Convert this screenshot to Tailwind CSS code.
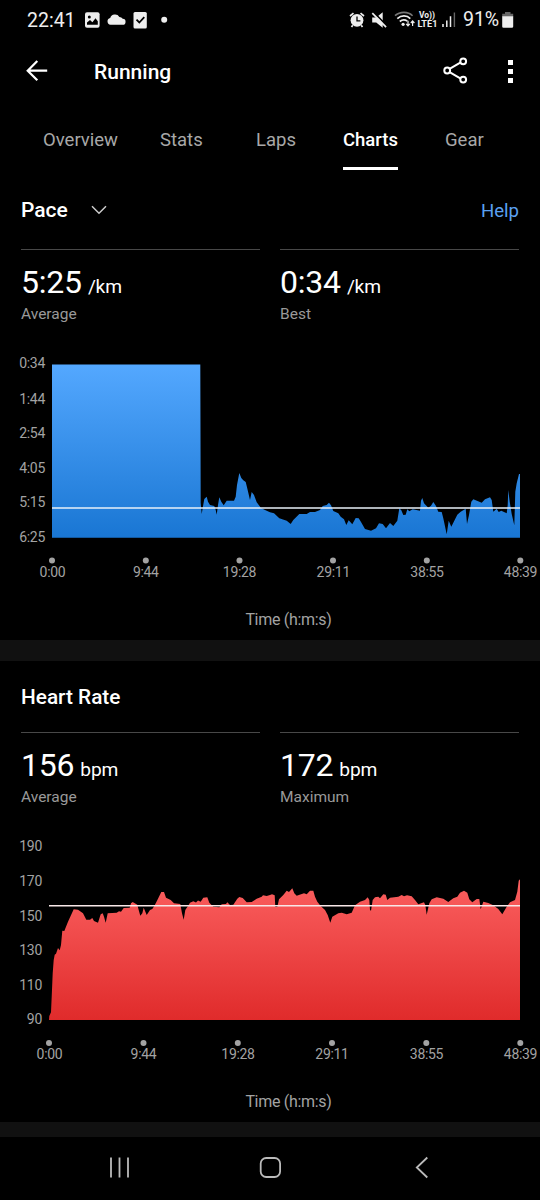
<!DOCTYPE html>
<html lang="en">
<head>
    <meta charset="UTF-8">
    <meta name="viewport" content="width=device-width, initial-scale=1.0">
    <title>Running - Charts</title>
    <script src="https://cdn.jsdelivr.net/npm/@tailwindcss/browser@4"></script>
</head>
<body class="bg-black font-['Roboto',sans-serif] text-white">
    <div class="w-[540px] h-[1200px] flex flex-col overflow-hidden">
        <!-- status bar -->
        <div class="h-10 flex items-center shrink-0 pl-[27px] text-[#eee]">
            <span class="w-[58px] pt-px text-[19.5px] leading-10">22:41</span>
            <svg class="w-[83px] h-10 shrink-0" viewBox="85 0 83 40" fill="#eee">
                <rect x="85" y="12.3" width="14.6" height="15.4" rx="2"/>
                <circle cx="89.3" cy="17" r="1.5" fill="#000"/>
                <path d="M87 24.8v-2.3l3-2.6 2.4 2.4 3.1-4 2.3 3v3.5z" fill="#000"/>
                <path d="M110.5 24.8a3.4 3.4 0 0 1-.3-6.7 5.1 5.1 0 0 1 9.2-1.1 3.9 3.9 0 0 1 3.3 1.8 3 3 0 0 1-.3 6z"/>
                <rect x="133.5" y="12" width="13.3" height="16.5" rx="1.5"/>
                <path d="m136.5 19.7 2.8 2.8 5-5.3" fill="none" stroke="#000" stroke-width="1.8"/>
                <circle cx="164.2" cy="19.7" r="3"/>
            </svg>
            <svg class="w-[112px] h-10 shrink-0 ml-auto" viewBox="347 0 112 40" fill="none" stroke="#eee">
                <!-- alarm -->
                <circle cx="357" cy="20.3" r="6.4" fill="#eee" stroke="none"/>
                <path d="M357 16.5v4.3h3.4" stroke="#000" stroke-width="1.3"/>
                <path d="m350 16 3.5-2.8M364 16l-3.5-2.8M352.8 25.3l-1.3 1.8M361.2 25.3l1.3 1.8" stroke-width="1.7"/>
                <!-- muted -->
                <path d="M372.2 17.5h4l6.5-5.3v15.5l-6.5-5.2h-4z" fill="#eee" stroke="none"/>
                <path d="m373.8 12.3 14 14.5" stroke="#000" stroke-width="1.8"/>
                <path d="m372.3 13.2 13.8 14" stroke-width="1.7"/>
                <!-- wifi -->
                <path d="M395 15.7c5-4.5 13-4.5 17.6 0" stroke="#777" stroke-width="1.6"/>
                <path d="M397.3 18.6c4-3.6 9.5-3.6 13 0M399.8 21.5c2.4-2 5.3-2 7.5-.4" stroke-width="1.7"/>
                <circle cx="403.1" cy="24.3" r="1.6" fill="#eee" stroke="none"/>
                <path d="M408 20.8v5m-1.8-2 1.8 2 1.8-2M412.6 26v-5m-1.8 2 1.8-2 1.8 2" stroke-width="1.2"/>
                <text x="419" y="18.4" font-size="9" font-weight="700" fill="#eee" stroke="none" textLength="16" lengthAdjust="spacingAndGlyphs">Vo))</text>
                <text x="417.4" y="27.3" font-size="9.4" font-weight="700" fill="#eee" stroke="none" textLength="20" lengthAdjust="spacingAndGlyphs">LTE1</text>
                <!-- signal -->
                <path d="M443 24v3M446.8 20.5V27M450.5 16.3V27" stroke-width="1.5"/>
                <path d="M454.4 12.5V27" stroke="#666" stroke-width="1.4"/>
            </svg>
            <span class="w-[37px] ml-1 text-[19.6px] leading-10 tracking-[-0.1px]">91%</span>
            <svg class="w-10 h-10 shrink-0" viewBox="500 0 40 40">
                <path d="M505 12h5.5v1.8h2.7v3h-11v-3h2.8z" fill="#666"/>
                <path d="M502.2 16.3h11v10.2q0 1.3-1.3 1.3h-8.4q-1.3 0-1.3-1.3z" fill="#eee"/>
            </svg>
        </div>

        <!-- app bar -->
        <header class="h-[62px] shrink-0 flex items-center pl-[26px] pr-[27px]">
            <svg class="w-6 h-6" viewBox="0 0 24 24" fill="none" stroke="#fff" stroke-width="2.2">
                <path d="M21.2 11.7H2M11.3 2 1.7 11.7l9.6 9.6"/>
            </svg>
            <h1 class="ml-11 pt-0.5 text-[21px] leading-7 font-medium">Running</h1>
            <svg class="w-[26px] h-7 ml-auto" viewBox="442 57 26 28" fill="none" stroke="#fff" stroke-width="2">
                <path d="m450 68.7 10.3-6M450 72.3l10.3 6"/>
                <circle cx="447.2" cy="70.5" r="2.9"/>
                <circle cx="463.2" cy="61.3" r="2.9"/>
                <circle cx="463.2" cy="79.6" r="2.9"/>
            </svg>
            <div class="ml-10 flex flex-col gap-1">
                <i class="w-[5px] h-[5px] bg-white"></i>
                <i class="w-[5px] h-[5px] bg-white"></i>
                <i class="w-[5px] h-[5px] bg-white"></i>
            </div>
        </header>

        <!-- tabs -->
        <nav class="h-[68px] shrink-0 flex pl-[43px] text-[18.5px] leading-[76px] text-[#a8a8a8]">
            <a class="w-[117px]">Overview</a>
            <a class="w-24">Stats</a>
            <a class="w-[87px]">Laps</a>
            <a class="w-[55px] mr-[47px] text-white font-medium border-b-3 border-white whitespace-nowrap">Charts</a>
            <a>Gear</a>
        </nav>

        <!-- pace -->
        <section class="h-[470px] shrink-0">
            <div class="h-[79px] flex items-center px-[21px]">
                <h2 class="pt-px text-[21px] leading-7 font-medium">Pace</h2>
                <svg class="w-4 h-4 ml-[23px]" viewBox="0 0 16 16" fill="none" stroke="#ccc" stroke-width="1.5">
                    <path d="m1 4.3 7 7 7-7"/>
                </svg>
                <a class="ml-auto pt-[3px] text-[18.6px] leading-7 text-[#5ba1f2]">Help</a>
            </div>
            <div class="grid grid-cols-2 gap-5 px-[21px]">
                <div class="h-[91px] border-t border-[#484848]">
                    <p class="h-[54px] pt-3 flex items-baseline gap-1.5 text-[32px] leading-10 tracking-[-0.2px]">5:25<span class="text-[19.2px] leading-6">/km</span></p>
                    <p class="text-[15.5px] leading-5 text-[#999]">Average</p>
                </div>
                <div class="h-[91px] border-t border-[#484848]">
                    <p class="h-[54px] pt-3 flex items-baseline gap-1.5 text-[32px] leading-10 tracking-[-0.2px]">0:34<span class="text-[19.2px] leading-6">/km</span></p>
                    <p class="text-[15.5px] leading-5 text-[#999]">Best</p>
                </div>
            </div>
            <svg class="block w-[540px] h-[300px] tracking-[-0.3px]" viewBox="0 340 540 300" fill="#a3a3a3" font-size="14">
                <defs>
                    <linearGradient id="paceFill" gradientUnits="userSpaceOnUse" x1="0" y1="364" x2="0" y2="538">
                        <stop offset="0" stop-color="#54a8ff"/>
                        <stop offset="1" stop-color="#1976d3"/>
                    </linearGradient>
                </defs>
                <g text-anchor="end">
                    <text x="45" y="368.3">0:34</text>
                    <text x="45" y="403.5">1:44</text>
                    <text x="45" y="438">2:54</text>
                    <text x="45" y="472.7">4:05</text>
                    <text x="45" y="507.3">5:15</text>
                    <text x="45" y="542">6:25</text>
                </g>
                <path fill="url(#paceFill)" d="M52 537.7V364.4H200.3L200.7 503 201.7 514 202.7 508 204.3 499 206.7 496.7 208 501.7 210 505 214.3 506 215.7 510 216.7 514.7 218 505 219.3 497.3 221.3 501.7 223.7 505.3 226.7 500.7 234 500.7 235.7 496.7 237 485 239.3 473 241.3 478 243.3 480.3 245.7 482 247 487.3 250 500 251.7 492 254 495 256.7 502.3 261 508 265 510 270 512.3 274 513.3 279.3 518.3 286.7 520.7 290.7 524 293.3 520 299.3 514 306.7 514 310 512 315 512 320 510 322.7 506 326.7 505 329 502.7 331 505.3 333.3 511 338.3 513.3 340.7 516.7 344 519.3 346.3 525 348.7 520.3 352.3 524.3 355.7 518 358.7 518.3 361 522 365 529 371 530.7 376 528.3 379 523.3 382.7 524 386 528.3 390 523 393.3 526 397.3 520.7 399.3 508.3 401.3 510.3 403.3 515 405.7 514.7 407.3 509.3 409.3 511.3 412.7 509.3 420 510.7 421 500.7 422.3 498 424 503.3 428.3 507.7 431 505.7 433.3 502 436 506 438.3 511.7 441.7 512 443.3 518.3 446.7 534.3 448.7 520.7 451.3 526.7 457.3 514.7 460.7 511.7 465.7 508.7 467 524 469 515 471.3 501.7 473.3 499.3 481.7 502.7 485 499.3 490 497.3 491.7 500 493.3 511.7 496.7 508.7 498.7 512 501.3 510.7 506.7 513.3 507.7 505 508.3 490 509.7 501.7 511.7 514 514.3 525.3 515.3 491.7 516.7 483.3 519 474H520V537.7z"/>
                <path d="M52 508.1H520" stroke="#e8f0f8" stroke-width="1.5"/>
                <g>
                    <circle cx="52" cy="560.6" r="3"/>
                    <circle cx="145.8" cy="560.6" r="3"/>
                    <circle cx="239.5" cy="560.6" r="3"/>
                    <circle cx="333" cy="560.6" r="3"/>
                    <circle cx="426.8" cy="560.6" r="3"/>
                    <circle cx="520.3" cy="560.6" r="3"/>
                </g>
                <g text-anchor="middle">
                    <text x="52.5" y="577">0:00</text>
                    <text x="145.8" y="577">9:44</text>
                    <text x="239.5" y="577">19:28</text>
                    <text x="333.3" y="577">29:11</text>
                    <text x="427" y="577">38:55</text>
                    <text x="520.5" y="577">48:39</text>
                    <text x="288.5" y="625" font-size="16">Time (h:m:s)</text>
                </g>
            </svg>
        </section>
        <div class="h-[21px] shrink-0 bg-[#111]"></div>

        <!-- heart rate -->
        <section class="h-[461px] shrink-0">
            <div class="h-[71px] flex items-center px-[21px]">
                <h2 class="text-[20.8px] leading-7 font-medium">Heart Rate</h2>
            </div>
            <div class="grid grid-cols-2 gap-5 px-[21px]">
                <div class="h-[90px] border-t border-[#484848]">
                    <p class="h-[54px] pt-3 flex items-baseline gap-1.5 text-[32px] leading-10 tracking-[-0.2px]">156<span class="text-[19.2px] leading-6">bpm</span></p>
                    <p class="text-[15.5px] leading-5 text-[#999]">Average</p>
                </div>
                <div class="h-[90px] border-t border-[#484848]">
                    <p class="h-[54px] pt-3 flex items-baseline gap-1.5 text-[32px] leading-10 tracking-[-0.2px]">172<span class="text-[19.2px] leading-6">bpm</span></p>
                    <p class="text-[15.5px] leading-5 text-[#999]">Maximum</p>
                </div>
            </div>
            <svg class="block w-[540px] h-[300px] tracking-[-0.3px]" viewBox="0 822 540 300" fill="#a3a3a3" font-size="14">
                <defs>
                    <linearGradient id="heartFill" gradientUnits="userSpaceOnUse" x1="0" y1="879" x2="0" y2="1020">
                        <stop offset="0" stop-color="#fb6060"/>
                        <stop offset="1" stop-color="#e02b2b"/>
                    </linearGradient>
                </defs>
                <g text-anchor="end">
                    <text x="42" y="851">190</text>
                    <text x="42" y="886">170</text>
                    <text x="42" y="920.5">150</text>
                    <text x="42" y="955">130</text>
                    <text x="42" y="989.5">110</text>
                    <text x="42" y="1024">90</text>
                </g>
                <path fill="url(#heartFill)" d="M49 1020 49.3 1016 51 1012.3 51.7 996.7 52.7 973.3 53.7 960 54.7 954.7 56 953.7 58 948 59.7 950.3 61 945 62.3 930.7 64.3 931 68 921.7 73.7 909.3 78 909.7 83 913.3 86.3 919.7 90 919.7 92.3 918 94 921 98 922.7 100.7 914.3 102.7 913.3 104 916.7 105.7 922.7 107.7 913.3 116.7 912.7 119 911.3 121 911.7 123.7 908 129.7 907.7 131 903.3 132.7 902 137.3 904.7 138.7 910 140.3 915.7 142.3 913.3 143.7 907.7 146.7 915 150 910 152.3 909 154.3 906 157 900.7 161.3 892 164 892 166 897.7 170.7 900 174 903.3 180.3 904 182 913.3 183.7 919.7 185.3 910 188 906 190 902.7 193.3 901.3 196 902.5 198 900.5 200.7 901.7 203.3 897.7 207.3 897.3 209.3 902.7 213.3 906.7 219.3 907.3 221.7 904.3 226 904 227.3 902.3 230 905 233.3 904.7 237.3 898.7 239.3 897 242.7 898 246.7 902.3 251.7 902 256.7 898.7 261.7 896.7 263 895.3 266.7 896 270 895 272 894.3 274.7 895.3 275.3 907 277.3 907 279 899.3 283.3 895 286.7 890.7 289 892 292.3 888.3 294.3 893.3 296.7 895.7 304 893.3 306.7 894.3 310 890.7 313.3 890.7 315 896.7 317.3 901.7 320.7 906 325 910 327.7 915 330.3 922.7 332.3 916.7 338.3 913.3 341.7 912.7 346.7 914.3 351.7 912.7 355 905.3 360 901.7 365 900 367.7 897.3 369.3 900 370 910 371 910.7 372.7 900 375 897.3 378.3 896.7 380 898.3 383.3 894.3 385.7 894.7 387.3 900 390 897.7 398.3 896.7 401.7 895 404 896.3 407 895.3 411.7 896.3 415 900 418.3 904.3 424 902.3 425.3 905 426.7 914.7 429.3 903.3 431.7 899.3 436.7 897.3 443.3 898.7 448.3 902 453.3 898.3 457.3 896.7 460 892.7 464 890.7 467.3 892.7 469.3 899.3 472.3 902.3 476.7 899 479.3 899 480.7 909.3 483.3 901.7 488.3 903 493.3 905.3 498.3 909 502.3 914.3 506.7 906.7 510 902.3 515 900 517.3 891.7 518.7 880.7 520 879.3V1020z"/>
                <path d="M49 905.8H520" stroke="#f8e8e8" stroke-width="1.5"/>
                <g>
                    <circle cx="49" cy="1043" r="3"/>
                    <circle cx="143.5" cy="1043" r="3"/>
                    <circle cx="237.8" cy="1043" r="3"/>
                    <circle cx="332" cy="1043" r="3"/>
                    <circle cx="426.3" cy="1043" r="3"/>
                    <circle cx="520.3" cy="1043" r="3"/>
                </g>
                <g text-anchor="middle">
                    <text x="49.5" y="1059">0:00</text>
                    <text x="143.5" y="1059">9:44</text>
                    <text x="238" y="1059">19:28</text>
                    <text x="332" y="1059">29:11</text>
                    <text x="426.5" y="1059">38:55</text>
                    <text x="520.5" y="1059">48:39</text>
                    <text x="288.5" y="1107" font-size="16">Time (h:m:s)</text>
                </g>
            </svg>
        </section>
        <div class="h-[15px] shrink-0 bg-[#111]"></div>

        <!-- android nav -->
        <div class="h-[63px] shrink-0 flex items-center justify-between pl-[109px] pr-[111px] pb-px">
            <svg class="w-[21px] h-6" viewBox="109 1156 21 24" fill="none" stroke="#bbb" stroke-width="1.8">
                <path d="M111 1157.5v20M119.5 1157.5v20M128 1157.5v20"/>
            </svg>
            <svg class="w-6 h-6 -ml-[5px]" viewBox="258 1156 24 24" fill="none" stroke="#bbb" stroke-width="1.8">
                <rect x="260.7" y="1158" width="19.4" height="19" rx="5.5"/>
            </svg>
            <svg class="w-[14px] h-6" viewBox="415 1156 14 24" fill="none" stroke="#bbb" stroke-width="1.8">
                <path d="m427.3 1157.5-10.5 10 10.5 10"/>
            </svg>
        </div>
    </div>
</body>
</html>
